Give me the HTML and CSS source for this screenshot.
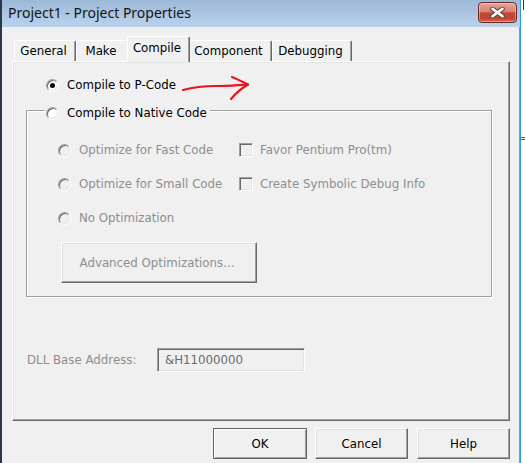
FILE: index.html
```html
<!DOCTYPE html>
<html>
<head>
<meta charset="utf-8">
<title>Project1 - Project Properties</title>
<link rel="stylesheet" href="styles.css">
</head>
<body>
<div class="window">
  <div class="titlebar">
    <span class="title">Project1 - Project Properties</span>
    <div class="close" aria-label="Close">
      <svg width="15" height="11" viewBox="0 0 15 11">
        <path d="M2.5 1.8 L12.5 9.2 M12.5 1.8 L2.5 9.2" stroke="#5b4a48" stroke-width="4.6" stroke-linecap="round" fill="none"/>
        <path d="M2.5 1.8 L12.5 9.2 M12.5 1.8 L2.5 9.2" stroke="#ffffff" stroke-width="2.6" stroke-linecap="round" fill="none"/>
      </svg>
    </div>
  </div>
  <div class="client">
    <div class="tabs">
      <div class="tab t-general">General</div>
      <div class="tab t-make">Make</div>
      <div class="tab t-compile active">Compile</div>
      <div class="tab t-component">Component</div>
      <div class="tab t-debug">Debugging</div>
    </div>
    <div class="panel">
      <div class="opt pcode"><span class="radio checked"></span>Compile to P-Code</div>
      <svg class="arrow" width="72" height="28" viewBox="0 0 72 28">
        <path d="M1 16 C 12 13, 22 12, 34 12 C 46 12, 56 11, 66 10.5" stroke="#e8161c" stroke-width="2.2" stroke-linecap="round" fill="none"/>
        <path d="M50 3 C 55 5, 61 8, 66 10.5 C 60 14, 54 19, 49 25" stroke="#e8161c" stroke-width="2.2" stroke-linecap="round" stroke-linejoin="round" fill="none"/>
      </svg>
      <fieldset class="group">
        <legend><span class="radio"></span>Compile to Native Code</legend>
        <div class="opts">
          <div class="opt dis"><span class="radio"></span>Optimize for Fast Code</div>
          <div class="opt dis cb"><span class="check"></span>Favor Pentium Pro(tm)</div>
          <div class="opt dis"><span class="radio"></span>Optimize for Small Code</div>
          <div class="opt dis cb"><span class="check"></span>Create Symbolic Debug Info</div>
          <div class="opt dis"><span class="radio"></span>No Optimization</div>
        </div>
        <div class="btn adv">Advanced Optimizations...</div>
      </fieldset>
      <div class="dll">
        <span class="lbl">DLL Base Address:</span>
        <div class="input">&amp;H11000000</div>
      </div>
    </div>
    <div class="actions">
      <div class="btn action default">OK</div>
      <div class="btn action cancel">Cancel</div>
      <div class="btn action help">Help</div>
    </div>
  </div>
</div>
<div class="edge">
  <div class="edge-top"></div>
  <div class="edge-mark"></div>
</div>
</body>
</html>
```
FILE: styles.css
```css
* { box-sizing: border-box; }
html, body { margin: 0; padding: 0; }
body {
  width: 525px;
  height: 463px;
  overflow: hidden;
  background: #ffffff;
  display: flex;
  font-family: "DejaVu Sans", sans-serif;
  font-size: 11.8px;
  line-height: 16px;
  color: #000;
}
.window {
  width: 521px;
  height: 463px;
  flex: none;
  display: flex;
  flex-direction: column;
  background: #f0f0f0;
  border-left: 2px solid #2c3845;
  border-right: 1px solid #2e9ddf;
  box-shadow: inset -1px 0 0 #8b97a3;
}
.titlebar {
  height: 27px;
  flex: none;
  display: flex;
  align-items: flex-start;
  justify-content: space-between;
  padding: 0 3px 0 6px;
  background: linear-gradient(#9db9d8, #bad2eb);
}
.title {
  font-family: "Noto Sans", sans-serif;
  font-size: 14px;
  line-height: 26px;
  color: #141414;
}
.close {
  width: 39px;
  height: 21px;
  margin-top: 2px;
  border: 1px solid #6e2a22;
  border-radius: 4px;
  background: linear-gradient(#e6a596 0%, #d98372 45%, #c64838 52%, #bf4432 80%, #d26a52 100%);
  box-shadow: inset 0 0 0 1px rgba(255, 255, 255, 0.35);
  display: flex;
  align-items: center;
  justify-content: center;
}
.client {
  flex: 1;
  padding: 9px 10px 0 10px;
}
.tabs {
  display: flex;
  align-items: flex-end;
  height: 26px;
  margin: 0 0 -1px 2px;
}
.tab {
  height: 21px;
  margin-bottom: 1px;
  padding: 2px 3px 0 0;
  text-align: center;
  background: #f0f0f0;
  border-top: 1px solid #ffffff;
  border-left: 1px solid #ffffff;
  border-right: 1px solid #696969;
  border-radius: 2px 2px 0 0;
  box-shadow: inset -1px 0 0 #a0a0a0;
  white-space: nowrap;
}
.t-general { width: 62px; }
.t-make { width: 53px; }
.t-compile { width: 63px; }
.t-component { width: 84px; }
.t-debug { width: 80px; }
.tab.active {
  height: 26px;
  margin: 0 -2px;
  padding-top: 3px;
  position: relative;
  z-index: 1;
}
.panel {
  position: relative;
  height: 360px;
  padding-top: 15px;
  border: 1px solid;
  border-color: #ffffff #696969 #696969 #ffffff;
  box-shadow: inset -1px -1px 0 #a0a0a0, inset 1px 1px 0 #e3e3e3;
}
.opt {
  display: flex;
  align-items: center;
  gap: 8px;
  white-space: nowrap;
}
.opt.cb { gap: 7px; }
.pcode {
  height: 16px;
  margin-left: 33px;
}
.arrow {
  position: absolute;
  left: 169px;
  top: 12px;
}
.radio {
  width: 13px;
  height: 13px;
  flex: none;
  border-radius: 50%;
  border: 1px solid;
  border-color: #a0a0a0 #ffffff #ffffff #a0a0a0;
  box-shadow: inset 1px 1px 0 #696969, inset -1px -1px 0 #e3e3e3;
  background: #ffffff;
}
.radio.checked {
  display: flex;
  align-items: center;
  justify-content: center;
}
.radio.checked::after {
  content: "";
  width: 5px;
  height: 5px;
  border-radius: 50%;
  background: #000;
}
.check {
  width: 14px;
  height: 14px;
  flex: none;
  border: 1px solid;
  border-color: #a0a0a0 #ffffff #ffffff #a0a0a0;
  box-shadow: inset 1px 1px 0 #696969, inset -1px -1px 0 #e3e3e3;
  background: #f0f0f0;
}
.dis { color: #8e8e8e; }
.dis .radio { background: #f0f0f0; }
.group {
  width: 466px;
  margin: 8px 0 0 13px;
  padding: 22px 0 13px 0;
  min-inline-size: 0;
  border: 1px solid #a0a0a0;
  box-shadow: 1px 1px 0 #ffffff, inset 1px 1px 0 #ffffff;
}
.group legend {
  display: flex;
  align-items: center;
  gap: 8px;
  height: 19px;
  margin-left: 18px;
  padding: 5px 3px 0 1px;
  line-height: 14px;
  background: #f0f0f0;
  white-space: nowrap;
}
.opts {
  display: grid;
  grid-template-columns: 181px auto;
  grid-template-rows: 16px 16px 16px;
  row-gap: 18px;
  margin-left: 31px;
}
.btn {
  display: flex;
  align-items: center;
  justify-content: center;
  background: #f0f0f0;
  border: 1px solid;
  border-color: #ffffff #696969 #696969 #ffffff;
  box-shadow: inset -1px -1px 0 #a0a0a0, inset 1px 1px 0 #e3e3e3;
  white-space: nowrap;
}
.adv {
  width: 196px;
  height: 41px;
  margin: 16px 0 0 34px;
  padding-right: 4px;
  color: #8e8e8e;
}
.dll {
  display: flex;
  align-items: center;
  height: 24px;
  margin: 51px 0 0 14px;
}
.lbl {
  width: 130px;
  color: #8e8e8e;
}
.input {
  width: 148px;
  height: 24px;
  display: flex;
  align-items: center;
  padding-left: 7px;
  border: 1px solid;
  border-color: #a0a0a0 #ffffff #ffffff #a0a0a0;
  box-shadow: inset 1px 1px 0 #696969, inset -1px -1px 0 #e3e3e3;
  color: #666a70;
}
.actions {
  display: flex;
  justify-content: flex-end;
  margin-top: 7px;
}
.action {
  height: 31px;
  width: 93px;
}
.action.default {
  width: 94px;
  border-color: #646464;
  box-shadow: inset 1px 1px 0 #ffffff, inset -1px -1px 0 #a0a0a0;
}
.action.cancel { margin-left: 8px; }
.action.help { margin-left: 9px; }
.edge {
  width: 4px;
  flex: none;
}
.edge-top {
  width: 1px;
  height: 10px;
  margin-left: 2px;
  background: #3a3a3a;
}
.edge-mark {
  width: 4px;
  height: 3px;
  margin-top: 127px;
  border-top: 1px solid #5a5a5a;
  border-bottom: 1px solid #5a5a5a;
}
```
